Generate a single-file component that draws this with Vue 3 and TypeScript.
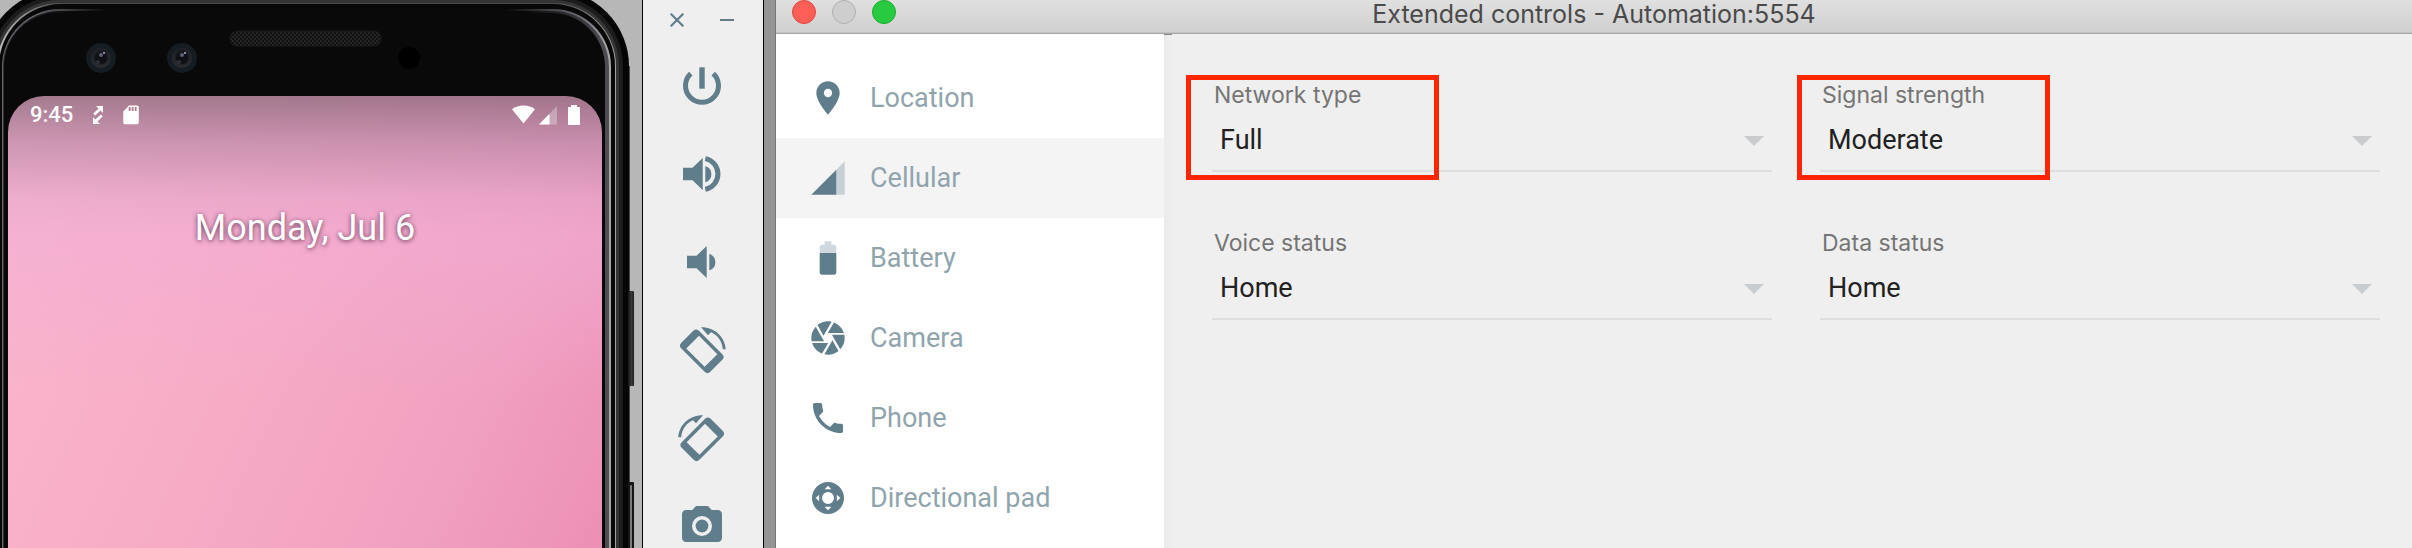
<script setup lang="ts">
import { ref } from 'vue'

interface Shape {
  d: string
  faded?: boolean
}
interface Section {
  label: string
  shapes: Shape[]
}
interface Field {
  id: string
  label: string
  value: string
  options: string[]
  mark?: string
}

const sections: Section[] = [
  {
    label: 'Location',
    shapes: [{ d: 'M12 2C8.13 2 5 5.13 5 9c0 5.25 7 13 7 13s7-7.75 7-13c0-3.87-3.13-7-7-7zm0 9.5a2.5 2.5 0 1 1 0-5 2.5 2.5 0 0 1 0 5z' }],
  },
  {
    label: 'Cellular',
    shapes: [{ d: 'M17 7v15h5V2z', faded: true }, { d: 'M17 7L2 22h15z' }],
  },
  {
    label: 'Battery',
    shapes: [
      { d: 'M17 5.33C17 4.6 16.4 4 15.67 4H14V2h-4v2H8.33C7.6 4 7 4.6 7 5.33V9h10z', faded: true },
      { d: 'M7 9v11.67C7 21.4 7.6 22 8.33 22h7.33c.74 0 1.34-.6 1.34-1.33V9z' },
    ],
  },
  {
    label: 'Camera',
    shapes: [{ d: 'M9.4 10.5l4.77-8.26C13.47 2.09 12.75 2 12 2c-2.4 0-4.6.85-6.32 2.25l3.66 6.35.06-.1zM21.54 9c-.92-2.92-3.15-5.26-6-6.34L11.88 9h9.66zm.26 1h-7.49l.29.5 4.76 8.25C21 16.97 22 14.61 22 12c0-.69-.07-1.35-.2-2zM8.54 12l-3.9-6.75C3.01 7.03 2 9.39 2 12c0 .69.07 1.35.2 2h7.49l-1.15-2zm-6.08 3c.92 2.92 3.15 5.26 6 6.34L12.12 15H2.46zm11.27 0l-3.9 6.76c.7.15 1.42.24 2.17.24 2.4 0 4.6-.85 6.32-2.25l-3.66-6.35-.93 1.6z' }],
  },
  {
    label: 'Phone',
    shapes: [{ d: 'M6.62 10.79c1.44 2.83 3.76 5.14 6.59 6.59l2.2-2.2c.27-.27.67-.36 1.02-.24 1.12.37 2.33.57 3.57.57.55 0 1 .45 1 1V20c0 .55-.45 1-1 1-9.39 0-17-7.61-17-17 0-.55.45-1 1-1h3.5c.55 0 1 .45 1 1 0 1.25.2 2.45.57 3.57.11.35.03.74-.25 1.02l-2.2 2.2z' }],
  },
  {
    label: 'Directional pad',
    shapes: [{ d: 'M12 2.4a9.6 9.6 0 1 0 0 19.2 9.6 9.6 0 0 0 0-19.2zM12 8.4a3.6 3.6 0 1 1 0 7.2 3.6 3.6 0 0 1 0-7.2zM12 4.6l2 2.1h-4zM12 19.4l-2-2.1h4zM4.6 12l2.1-2v4zM19.4 12l-2.1 2v-4z' }],
  },
]

const active = ref('Cellular')

const fields = ref<Field[]>([
  { id: 'network', label: 'Network type', value: 'Full', options: ['Full', 'LTE', 'HSDPA', 'UMTS', 'EDGE', 'GPRS', 'GSM'], mark: 'mark-network' },
  { id: 'signal', label: 'Signal strength', value: 'Moderate', options: ['None', 'Poor', 'Moderate', 'Good', 'Great'], mark: 'mark-signal' },
  { id: 'voice', label: 'Voice status', value: 'Home', options: ['Home', 'Roaming', 'Searching', 'Denied'] },
  { id: 'data', label: 'Data status', value: 'Home', options: ['Home', 'Roaming', 'Searching', 'Denied'] },
])
</script>

<template>
  <div class="desktop">
    <section class="emulator" aria-label="Emulator">
      <svg class="frame" width="642" height="1300" viewBox="0 0 642 1300" aria-hidden="true">
        <defs>
          <linearGradient id="rim" gradientUnits="userSpaceOnUse" x1="3" x2="610" y1="0" y2="0">
            <stop offset="0" stop-color="#66666b" />
            <stop offset="0.05" stop-color="#6a6a72" />
            <stop offset="0.17" stop-color="#090909" />
            <stop offset="0.83" stop-color="#090909" />
            <stop offset="0.95" stop-color="#6a6a72" />
            <stop offset="1" stop-color="#a8a8aa" />
          </linearGradient>
          <linearGradient id="rimInner" gradientUnits="userSpaceOnUse" x1="3" x2="610" y1="0" y2="0">
            <stop offset="0" stop-color="#2e2e32" />
            <stop offset="0.12" stop-color="#090909" />
            <stop offset="0.86" stop-color="#090909" />
            <stop offset="1" stop-color="#505056" />
          </linearGradient>
          <linearGradient id="edge" gradientUnits="userSpaceOnUse" x1="0" x2="616" y1="0" y2="0">
            <stop offset="0" stop-color="#bbb" />
            <stop offset="0.1" stop-color="#4a4a4a" />
            <stop offset="0.9" stop-color="#4a4a4a" />
            <stop offset="1" stop-color="#a2a29e" />
          </linearGradient>
          <linearGradient id="key" x1="0" x2="1" y1="0" y2="0">
            <stop offset="0" stop-color="#151515" />
            <stop offset="0.6" stop-color="#3a3a3a" />
            <stop offset="1" stop-color="#1c1c1c" />
          </linearGradient>
          <pattern id="mesh" width="4" height="4" patternUnits="userSpaceOnUse">
            <rect width="4" height="4" fill="#111" />
            <circle cx="1" cy="1" r="0.9" fill="#2f2f2f" />
            <circle cx="3" cy="3" r="0.9" fill="#2f2f2f" />
          </pattern>
          <radialGradient id="lens" cx="0.5" cy="0.4" r="0.6">
            <stop offset="0" stop-color="#3c4250" />
            <stop offset="0.4" stop-color="#17191e" />
            <stop offset="1" stop-color="#2d3033" />
          </radialGradient>
        </defs>
        <rect x="560" y="66" width="70" height="1300" fill="#484848" />
        <rect x="-16" y="-10" width="645" height="1500" rx="76" fill="#050505" />
        <rect x="-10" y="-4" width="633" height="1500" rx="70" fill="#1c1c1c" />
        <rect x="-6" y="0" width="625" height="1500" rx="66" fill="#343434" />
        <rect x="-3" y="3" width="619" height="1500" rx="63" fill="url(#edge)" />
        <rect x="-1" y="4" width="616" height="1500" rx="62" fill="#080808" />
        <rect x="2" y="9" width="609" height="1500" rx="58" fill="url(#rim)" />
        <rect x="3" y="11" width="606" height="1500" rx="56" fill="url(#rimInner)" />
        <rect x="4" y="13" width="601" height="1500" rx="54" fill="#090909" />
        <rect x="628" y="291" width="6" height="95" rx="1" fill="url(#key)" />
        <rect x="628" y="482" width="6" height="180" rx="1" fill="#161616" />
        <rect x="630" y="485" width="2" height="170" rx="1" fill="#7d7d7d" />
        <g v-for="cx in [101, 182]" :key="cx">
          <circle :cx="cx" cy="58" r="15" fill="#151d22" />
          <circle :cx="cx" cy="58" r="10" fill="url(#lens)" />
          <circle :cx="cx" cy="58" r="6" fill="#0e1013" />
          <circle :cx="cx" cy="55" r="2" fill="#59607a" />
          <circle :cx="cx + 3" cy="53" r="1" fill="#aeb2c8" />
          <circle :cx="cx - 3" cy="62" r="2" fill="#2c3038" />
        </g>
        <rect x="230" y="31" width="151" height="15" rx="7" fill="url(#mesh)" stroke="#1a1a1a" />
        <circle cx="409" cy="58" r="11" fill="#000" />
      </svg>
      <div class="screen">
        <div class="status">
          <span class="clock">9:45</span>
          <svg class="debug" width="10" height="20" viewBox="0 0 10 20" aria-hidden="true">
            <path d="M3 1h7v7L7.700 5.500 2 10.500.300 8.600 5.600 3.500zM0 19v-7l2.300 2.500L8 9.500l1.700 1.900L4.400 16.500 7 19z" fill="#fff" />
          </svg>
          <svg width="16" height="20" viewBox="0 0 16 20" aria-hidden="true">
            <path d="M14 .500H6L.300 6.500v11c0 1 .8 1.800 1.800 1.800H14c1 0 1.800-.8 1.800-1.800V2.300C15.800 1.300 15 .500 14 .500zM7.600 6H5.700V2h1.900zm3 0H8.700V2h1.900zm3 0h-1.900V2h1.900z" fill="#fff" fill-rule="evenodd" />
          </svg>
          <span class="spacer"></span>
          <svg width="23" height="20" viewBox="0 0 23 20" aria-hidden="true">
            <path d="M11.500 18.500L0 4.200C3.300 1.700 7.300.500 11.500.500S19.700 1.700 23 4.200z" fill="#fff" />
          </svg>
          <svg class="bars" width="18" height="20" viewBox="0 0 18 20" aria-hidden="true">
            <path d="M0 19.500h18V1z" fill="#fff" opacity="0.3" />
            <path d="M0 19.500h10.500V8.700z" fill="#fff" />
          </svg>
          <svg width="12" height="20" viewBox="0 0 12 20" aria-hidden="true">
            <path d="M3 0h6v2h2c.6 0 1 .4 1 1v16c0 .6-.4 1-1 1H1c-.6 0-1-.4-1-1V3c0-.6.4-1 1-1h2z" fill="#fff" />
          </svg>
        </div>
        <p class="date">Monday, Jul 6</p>
      </div>
    </section>

    <aside class="tools" aria-label="Emulator tools">
      <div class="window-keys">
        <button type="button" aria-label="Close">
          <svg width="14" height="14" viewBox="0 0 14 14"><path d="M.700.700l12.600 12.600M13.300.700L.700 13.300" stroke="currentColor" stroke-width="2.200" /></svg>
        </button>
        <button type="button" aria-label="Minimize">
          <svg width="14" height="14" viewBox="0 0 14 14"><path d="M0 7h14" stroke="currentColor" stroke-width="2" /></svg>
        </button>
      </div>
      <button type="button" aria-label="Power">
        <svg width="48" height="48" viewBox="0 0 48 48">
          <path d="M12.800 11.600A16.500 16.500 0 1 0 35.200 11.600" fill="none" stroke="currentColor" stroke-width="5" />
          <path d="M21.300 5.300h5.400v21.400h-5.400z" fill="currentColor" />
        </svg>
      </button>
      <button type="button" aria-label="Volume up">
        <svg width="48" height="48" viewBox="0 0 48 48">
          <path d="M5 17.700h9.500L24.700 8v32L14.500 30.300H5zM27.300 16a8.500 8.500 0 0 1 0 16.300z" fill="currentColor" />
          <path d="M27.300 8.600A15.700 15.700 0 0 1 27.300 39.400" fill="none" stroke="currentColor" stroke-width="5" />
        </svg>
      </button>
      <button type="button" aria-label="Volume down">
        <svg width="48" height="48" viewBox="0 0 48 48">
          <path d="M9 17.700h9.500L28.700 8v32L18.500 30.300H9zM31.300 16a8.500 8.500 0 0 1 0 16.300z" fill="currentColor" />
        </svg>
      </button>
      <button v-for="side in ['left', 'right']" :key="side" type="button" :aria-label="`Rotate ${side}`">
        <svg width="48" height="48" viewBox="0 0 48 48">
          <g :transform="side === 'right' ? 'translate(48 0) scale(-1 1)' : undefined" fill="currentColor">
            <g transform="translate(23.800 25.300) rotate(45)">
              <path fill-rule="evenodd" d="M-16.500-12.500h33a4 4 0 0 1 4 4v17a4 4 0 0 1-4 4h-33a4 4 0 0 1-4-4v-17a4 4 0 0 1 4-4zM-13-9v18h26V-9z" />
            </g>
            <path d="M23 1.300C36.500 1 47 11 47.700 23.300h-2.900C44.300 15.500 39.700 9.200 33 6.300L30 9.300z" />
          </g>
        </svg>
      </button>
      <button type="button" aria-label="Take screenshot">
        <svg width="48" height="48" viewBox="0 0 24 24" fill="currentColor">
          <circle cx="12" cy="12" r="3.200" />
          <path d="M9 2L7.170 4H4c-1.100 0-2 .9-2 2v12c0 1.100.9 2 2 2h16c1.100 0 2-.9 2-2V6c0-1.100-.9-2-2-2h-3.170L15 2zm3 15a5 5 0 1 1 0-10 5 5 0 0 1 0 10z" />
        </svg>
      </button>
    </aside>

    <main class="window">
      <header class="titlebar">
        <div class="lights">
          <button type="button" class="light red" aria-label="Close window"></button>
          <button type="button" class="light grey" aria-label="Minimize window" disabled></button>
          <button type="button" class="light green" aria-label="Zoom window"></button>
        </div>
        <h1>Extended controls - Automation:5554</h1>
        <div class="lights-balance"></div>
      </header>
      <div class="body">
        <nav class="sidebar" aria-label="Sections">
          <button
            v-for="s in sections"
            :key="s.label"
            type="button"
            class="item"
            :class="{ active: s.label === active }"
            @click="active = s.label"
          >
            <svg width="40" height="40" viewBox="0 0 24 24" aria-hidden="true">
              <path v-for="(p, i) in s.shapes" :key="i" :d="p.d" :opacity="p.faded ? 0.3 : 1" fill="#607d8b" fill-rule="evenodd" />
            </svg>
            <span>{{ s.label }}</span>
          </button>
        </nav>
        <div class="divider"></div>
        <form class="fields" @submit.prevent>
          <div v-for="f in fields" :key="f.id" class="field">
            <label :for="f.id">{{ f.label }}</label>
            <div class="picker">
              <select :id="f.id" v-model="f.value">
                <option v-for="o in f.options" :key="o">{{ o }}</option>
              </select>
              <svg class="arrow" width="20" height="10" viewBox="0 0 20 10" aria-hidden="true"><path d="M0 0h20L10 10z" fill="#c8cccf" /></svg>
            </div>
            <div v-if="f.mark" class="mark" :class="f.mark"></div>
          </div>
        </form>
      </div>
    </main>
  </div>
</template>

<style>
body {
  margin: 0;
}
</style>

<style scoped>
.desktop {
  display: flex;
  height: 100vh;
  overflow: hidden;
  background: #b7b7b7;
  font-family: Roboto, "Liberation Sans", sans-serif;
}
button {
  padding: 0;
  border: 0;
  background: none;
  color: inherit;
  font: inherit;
}
svg {
  display: block;
  flex: none;
}

/* Device */
.emulator {
  position: relative;
  flex: none;
  display: flex;
  box-sizing: border-box;
  width: 642px;
  padding: 96px 40px 0 8px;
  overflow: hidden;
}
.frame {
  position: absolute;
  top: 0;
  left: 0;
}
.screen {
  position: relative;
  flex: 1;
  border-radius: 36px 36px 0 0;
  color: #fff;
  background:
    linear-gradient(to bottom, rgba(50, 45, 45, 0.42) 0, rgba(70, 60, 70, 0.24) 45px, rgba(100, 90, 110, 0.06) 100px, transparent 140px),
    linear-gradient(to bottom, rgba(240, 172, 218, 0.5) 0, rgba(240, 172, 218, 0.45) 150px, transparent 300px),
    linear-gradient(115deg, #fbb9cd 0, #f7abc5 45%, #f1a1c0 75%, #ec90b5 100%);
}
.status {
  display: flex;
  align-items: center;
  height: 38px;
  padding: 0 22px;
}
.clock {
  font-size: 22px;
  font-weight: 500;
  line-height: 28px;
}
.debug {
  margin: 0 20px;
}
.spacer {
  flex: 1;
}
.bars {
  margin: 0 11px 0 4px;
}
.date {
  margin: 72px 0 0;
  font-size: 36px;
  line-height: 44px;
  text-align: center;
  text-shadow: 0 1px 5px rgba(60, 20, 50, 0.8);
}

/* Emulator tools */
.tools {
  flex: none;
  display: flex;
  flex-direction: column;
  align-items: center;
  gap: 40px;
  box-sizing: border-box;
  width: 122px;
  padding: 0 2px 0 0;
  border: solid #000;
  border-width: 0 1px;
  background: #efefef;
  color: #607d8b;
}
.tools > * {
  flex: none;
}
.window-keys {
  display: flex;
  align-items: center;
  gap: 36px;
  height: 40px;
  margin-bottom: -18px;
}

/* Extended controls window */
.window {
  flex: 1;
  display: flex;
  flex-direction: column;
  min-width: 0;
  border-left: 1px solid #777;
  margin-left: 11px;
  box-shadow: -11px 0 0 #959595;
  background: #efefef;
}
.titlebar {
  display: flex;
  align-items: flex-start;
  justify-content: space-between;
  box-sizing: border-box;
  height: 34px;
  padding: 0 16px;
  border-bottom: 1px solid #a6a6a6;
  background: linear-gradient(#e0e0e0, #cfcfcf);
  box-shadow: inset 0 -1px 0 #c2c2c2;
}
.lights,
.lights-balance {
  display: flex;
  gap: 16px;
  width: 104px;
}
.light {
  box-sizing: border-box;
  width: 24px;
  height: 24px;
  border: 1px solid;
  border-radius: 50%;
}
.red {
  border-color: #e2463f;
  background: #ff5f57;
}
.grey {
  border-color: #b0b0b0;
  background: #cecece;
}
.green {
  border-color: #14ae28;
  background: #28ca42;
}
h1 {
  margin: 0;
  color: #4a4a4a;
  font-family: Inter, Roboto, sans-serif;
  font-size: 25px;
  font-weight: 400;
  line-height: 28px;
}
.body {
  flex: 1;
  display: flex;
  min-height: 0;
}
.sidebar {
  flex: none;
  width: 388px;
  padding-top: 24px;
  overflow: hidden;
  background: #fff;
}
.item {
  display: flex;
  align-items: center;
  gap: 22px;
  width: 100%;
  height: 80px;
  padding: 0 32px;
  color: #90a4ae;
  font-size: 27px;
  line-height: 32px;
}
.active {
  background: #f4f4f4;
}
.divider {
  flex: none;
  box-sizing: border-box;
  width: 8px;
  border-top: 1px solid #8a8a8a;
  background: linear-gradient(to right, #ebebeb, #efefef);
}
.fields {
  flex: 1;
  display: grid;
  grid-template-columns: 1fr 1fr;
  align-content: start;
  gap: 56px 48px;
  padding: 46px 32px 0 40px;
}
.field {
  position: relative;
}
label {
  display: block;
  padding-left: 2px;
  color: #757575;
  font-family: Inter, Roboto, sans-serif;
  font-size: 23px;
  line-height: 30px;
}
.picker {
  position: relative;
}
select {
  display: block;
  box-sizing: border-box;
  width: 100%;
  height: 62px;
  padding: 0 40px 0 8px;
  appearance: none;
  border: 0;
  border-bottom: 2px solid #dedede;
  border-radius: 0;
  background: none;
  color: #212121;
  font-family: Roboto, "Liberation Sans", sans-serif;
  font-size: 27px;
  outline: 0;
}
.arrow {
  position: absolute;
  top: 26px;
  right: 8px;
  pointer-events: none;
}
.mark {
  position: absolute;
  top: -5px;
  width: 243px;
  height: 95px;
  border: 5px solid #ff2600;
  pointer-events: none;
}
.mark-network {
  left: -26px;
}
.mark-signal {
  left: -23px;
}
</style>
